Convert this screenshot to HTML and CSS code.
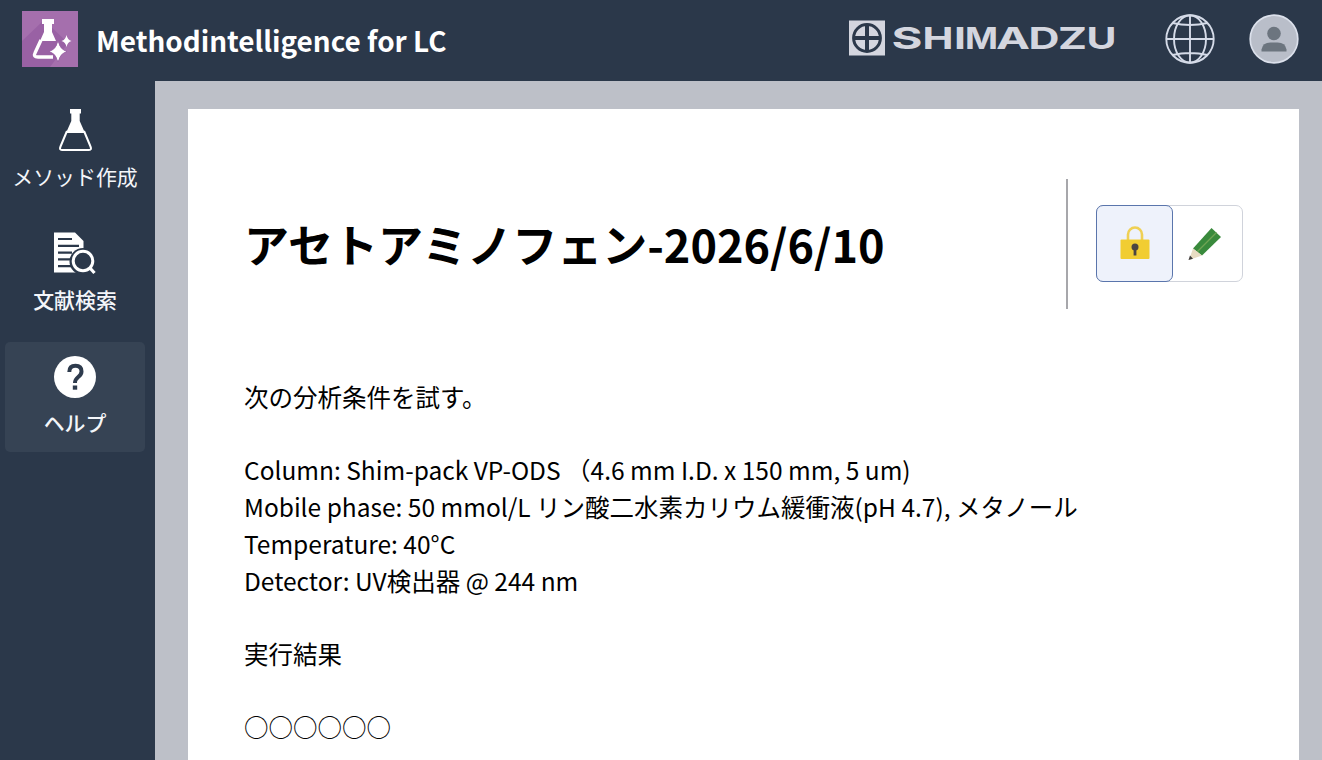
FILE: index.html
```html
<!DOCTYPE html>
<html lang="ja">
<head>
<meta charset="utf-8">
<title>Methodintelligence for LC</title>
<link rel="stylesheet" href="styles.css">
</head>
<body>
<header class="topbar">
  <svg class="app-icon" viewBox="0 0 56 56">
    <rect width="56" height="56" fill="#a56fad"/>
    <path d="M0 30L22 9L46 32L28 56H0Z" fill="#9961a4"/>
    <path d="M20 8h12v5h-2v8l4 9H18l4-9v-8h-2z" fill="#fff"/>
    <path d="M19 29L13 42q-2 4 3 4h15" fill="none" stroke="#fff" stroke-width="3.4"/>
    <path d="M36 30q2 9 9 10.500q-7 1.500-9 10.500q-2-9-9-10.500q7-1.500 9-10.500z" fill="#fff" stroke="#9961a4" stroke-width="1"/>
    <path d="M36 31q2 8 8 9.500q-6 1.500-8 9.500q-2-8-8-9.500q6-1.500 8-9.500zM44.500 24q1 5 5 6q-4 1-5 6q-1-5-5-6q4-1 5-6z" fill="#fff"/>
  </svg>
  <h1 class="app-name">Methodintelligence for LC</h1>
  <svg class="brand" viewBox="0 0 268 40">
    <rect x="0" y="1.500" width="36" height="35" fill="#d4d6df"/>
    <g fill="none" stroke="#2b384a"><circle cx="18" cy="19" r="13.400" stroke-width="3"/><path d="M18 6v26M4.500 19h27" stroke-width="4"/></g>
    <text class="wordmark" y="30"><tspan x="42.500" textLength="31" lengthAdjust="spacingAndGlyphs">S</tspan><tspan x="73.500" textLength="31" lengthAdjust="spacingAndGlyphs">H</tspan><tspan x="105" textLength="12" lengthAdjust="spacingAndGlyphs">I</tspan><tspan x="116" textLength="33" lengthAdjust="spacingAndGlyphs">M</tspan><tspan x="147" textLength="34" lengthAdjust="spacingAndGlyphs">A</tspan><tspan x="179.500" textLength="31" lengthAdjust="spacingAndGlyphs">D</tspan><tspan x="209" textLength="29" lengthAdjust="spacingAndGlyphs">Z</tspan><tspan x="237.500" textLength="30" lengthAdjust="spacingAndGlyphs">U</tspan></text>
  </svg>
  <svg class="globe" viewBox="0 0 50 50" fill="none" stroke="#d5dbe8" stroke-width="1.900">
    <circle cx="25" cy="25" r="23.700"/><ellipse cx="25" cy="25" rx="16" ry="23.700"/>
    <path d="M25 1v48M1 25h48M7.500 9q17.500 4 35 0M7.500 41q17.500-4 35 0"/>
  </svg>
  <svg class="avatar" viewBox="0 0 50 50">
    <circle cx="25" cy="25" r="23.800" fill="#b9bec9" stroke="#dbe0eb" stroke-width="1.700"/>
    <circle cx="25" cy="19.500" r="6.800" fill="#6c757f"/>
    <path d="M12.500 37.500v-2q1-7 9-7h7q8 0 9 7v2z" fill="#6c757f"/>
  </svg>
</header>
<div class="shell">
  <nav class="sidebar">
    <a class="nav-item">
      <svg class="nav-icon" viewBox="0 0 44 44">
        <path d="M17 1h11v4.500h-1.300V13l5.300 12H13l5.300-12V5.500H17z" fill="#fff"/>
        <path d="M14 23L7.500 38.500Q6 42 9 42h27q3 0 1.500-3.500L31 23" fill="none" stroke="#fff" stroke-width="2"/>
      </svg>
      <span class="nav-label">メソッド作成</span>
    </a>
    <a class="nav-item">
      <svg class="nav-icon" viewBox="0 0 44 44">
        <path d="M1 1.500h21l8.500 8.500V41.500H1z" fill="#fff"/>
        <path d="M5 8h14M5 14.800h21M5 21.600h14M5 28.400h12M5 35.200h13" stroke="#2b384a" stroke-width="2.200"/>
        <circle cx="30" cy="30.500" r="13.500" fill="#2b384a"/>
        <circle cx="30" cy="30" r="9.800" fill="none" stroke="#fff" stroke-width="3"/>
        <path d="M36.500 36.500l5 5.500" stroke="#fff" stroke-width="3.200"/>
      </svg>
      <span class="nav-label medium">文献検索</span>
    </a>
    <a class="nav-item active">
      <svg class="nav-icon" viewBox="0 0 44 44">
        <circle cx="22" cy="23" r="21" fill="#fff"/>
        <path d="M16.300 18q0-6.200 6.200-6.200q6 0 6 5.700q0 3-3.300 5.500q-3.200 2.500-3.200 6" fill="none" stroke="#2e3b4d" stroke-width="4"/>
        <path d="M19.800 31.500h4.400v4.200h-4.400z" fill="#2e3b4d"/>
      </svg>
      <span class="nav-label medium">ヘルプ</span>
    </a>
  </nav>
  <main class="workspace">
    <article class="sheet">
      <div class="sheet-head">
        <h2 class="title">アセトアミノフェン-2026/6/10</h2>
        <div class="tools">
          <div class="toggle">
            <button class="tool selected" aria-label="ロック">
              <svg class="tool-icon" viewBox="0 0 36 36">
                <path d="M11 15V8.500a7 7 0 0 1 14 0V15" fill="none" stroke="#efd054" stroke-width="2.600"/>
                <rect x="3.500" y="13.500" width="29" height="19.500" rx="1" fill="#f1cd32"/>
                <circle cx="18" cy="21" r="3.500" fill="#4b4542"/><path d="M18 21.500v8" stroke="#4b4542" stroke-width="2.800"/>
              </svg>
            </button>
            <button class="tool" aria-label="編集">
              <svg class="tool-icon pencil" viewBox="0 0 36 36">
                <path d="M7 22.500L25.500 2L35 11L16 29.500z" fill="#398a3c"/>
                <path d="M11 26L30.500 6.500" stroke="#70a454" stroke-width="1.200"/>
                <path d="M7 22.500L16 29.500L3 34z" fill="#e8dcc2"/><path d="M4 29.500L7 32.700L2.500 34z" fill="#3f3c3b"/>
              </svg>
            </button>
          </div>
        </div>
      </div>
      <div class="content">
        <p>次の分析条件を試す。</p>
        <p>Column: Shim-pack VP-ODS （4.6 mm I.D. x 150 mm, 5 um)<br>Mobile phase: 50 mmol/L リン酸二水素カリウム緩衝液(pH 4.7), メタノール<br>Temperature: 40°C<br>Detector: UV検出器 @ 244 nm</p>
        <p>実行結果</p>
        <p>○○○○○○</p>
      </div>
    </article>
  </main>
</div>
</body>
</html>
```
FILE: styles.css
```css
* { box-sizing: border-box; }
body {
  margin: 0;
  height: 760px;
  display: flex;
  flex-direction: column;
  overflow: hidden;
  background: #2b384a;
  color: #000;
  font-family: "Noto Sans CJK JP", sans-serif;
}
.topbar {
  flex: 0 0 81px;
  display: flex;
  align-items: center;
  padding: 0 22px 3px;
  color: #fff;
}
.app-icon { width: 56px; height: 56px; }
.app-name { margin: 1px 0 0 18px; font-size: 27.9px; line-height: 40px; font-weight: 700; white-space: nowrap; }
.brand { width: 268px; height: 40px; margin-left: auto; }
.wordmark { font-family: Inter, sans-serif; font-size: 30px; font-weight: 700; fill: #d4d6df; }
.globe { width: 50px; height: 50px; margin: 0 0 0 48px; }
.avatar { width: 50px; height: 50px; margin: 0 1px 0 34px; }
.shell { flex: 1; min-height: 0; display: flex; }
.sidebar { flex: 0 0 155px; padding: 15px 10px 0 5px; display: flex; flex-direction: column; gap: 13px; }
.nav-item {
  height: 110px;
  padding-top: 12px;
  border-radius: 5px;
  display: flex;
  flex-direction: column;
  align-items: center;
  color: #f4f6fa;
}
.active { background: #364354; }
.nav-icon { width: 44px; height: 44px; }
.nav-label { margin-top: 8px; font-size: 20.9px; line-height: 32px; white-space: nowrap; }
.medium { font-weight: 500; }
.workspace { flex: 1; min-width: 0; padding: 28px 23px 0 33px; background: #bdc0c8; }
.sheet { height: 651px; padding: 70px 56px 0 56px; background: #fff; }
.sheet-head { height: 130px; display: flex; justify-content: space-between; }
.title { margin: 30px 0 0; font-size: 45px; line-height: 70px; font-weight: 700; white-space: nowrap; }
.tools { width: 177px; padding: 26px 0 0 28px; border-left: 2px solid #a7a7ab; }
.toggle { width: 147px; height: 77px; display: flex; border: 1px solid #d0d3db; border-radius: 7px; }
.tool { width: 69px; padding: 0; border: 0; background: none; display: grid; place-items: center; }
.selected { width: 77px; height: 77px; margin: -1px 0 0 -1px; border: 1px solid #5a75ac; border-radius: 7px; background: #eef2fb; }
.tool-icon { width: 36px; height: 36px; }
.pencil { margin-right: 8px; }
.content { margin-top: 70px; font-size: 24.5px; line-height: 36.7px; }
.content p { margin: 0 0 36.7px; white-space: nowrap; }
```
